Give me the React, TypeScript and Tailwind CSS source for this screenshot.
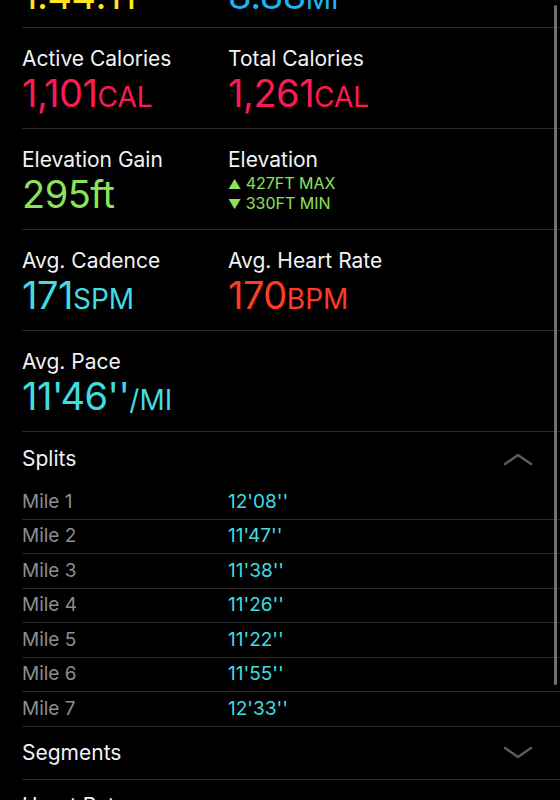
import type { ReactNode } from 'react';

const font = { fontFamily: 'Inter, "Noto Sans", sans-serif' };

function Chevron({ up }: { up?: boolean }) {
  return (
    <svg width="30" height="14" viewBox="0 0 30 14" fill="none" className="text-[#5c5c60]">
      <polyline
        points={up ? '2,12 15,3 28,12' : '2,2 15,11 28,2'}
        stroke="currentColor"
        strokeWidth="2.4"
        strokeLinecap="round"
        strokeLinejoin="round"
      />
    </svg>
  );
}

function Value({ num, unit, color }: { num: string; unit?: string; color: string }) {
  return (
    <div className={`mt-[2px] text-[38px] leading-[40px] tracking-[-0.5px] ${color}`}>
      {num}
      {unit ? <span className="text-[28px] tracking-[0px]">{unit}</span> : null}
    </div>
  );
}

function Metric({ label, children }: { label?: string; children?: ReactNode }) {
  return (
    <div>
      {label ? <div className="text-[21px] leading-[25px] text-[#f2f2f4]">{label}</div> : <div className="h-[25px]" />}
      {children}
    </div>
  );
}

function Row({ children, first }: { children: ReactNode; first?: boolean }) {
  return (
    <div
      className={`grid grid-cols-[206px_1fr] border-b border-[#2b2b2e] pt-[18px] ${
        first ? '-mt-[70px] h-[98px]' : 'h-[101px]'
      }`}
    >
      {children}
    </div>
  );
}

const splits = [
  ['Mile 1', "12'08''"],
  ['Mile 2', "11'47''"],
  ['Mile 3', "11'38''"],
  ['Mile 4', "11'26''"],
  ['Mile 5', "11'22''"],
  ['Mile 6', "11'55''"],
  ['Mile 7', "12'33''"],
];

export default function App() {
  return (
    <div className="relative h-[800px] w-[560px] overflow-hidden bg-black" style={font}>
      <div className="pl-[22px]">
        <Row first>
          <Metric label="Workout Time">
            <Value num="1:44:11" color="text-[#ffe620]" />
          </Metric>
          <Metric label="Distance">
            <Value num="8.88" unit="MI" color="text-[#1fb4f0]" />
          </Metric>
        </Row>
        <Row>
          <Metric label="Active Calories">
            <Value num="1,101" unit="CAL" color="text-[#fb1a55]" />
          </Metric>
          <Metric label="Total Calories">
            <Value num="1,261" unit="CAL" color="text-[#fb1a55]" />
          </Metric>
        </Row>
        <Row>
          <Metric label="Elevation Gain">
            <Value num="295ft" color="text-[#8ee25b]" />
          </Metric>
          <Metric label="Elevation">
            <div className="mt-[2px] text-[16px] leading-[19px] text-[#8ee25b]">
              <div>
                <span className="text-[13px]">▲</span> 427FT MAX
              </div>
              <div>
                <span className="text-[13px]">▼</span> 330FT MIN
              </div>
            </div>
          </Metric>
        </Row>
        <Row>
          <Metric label="Avg. Cadence">
            <Value num="171" unit="SPM" color="text-[#43dbe2]" />
          </Metric>
          <Metric label="Avg. Heart Rate">
            <Value num="170" unit="BPM" color="text-[#ff3b27]" />
          </Metric>
        </Row>
        <Row>
          <Metric label="Avg. Pace">
            <Value num="11'46''" unit="/MI" color="text-[#43dbe2]" />
          </Metric>
          <Metric />
        </Row>

        <section>
          <div className="flex h-[53px] items-center justify-between pr-[27px]">
            <span className="text-[21px] leading-[25px] text-[#f2f2f4]">Splits</span>
            <Chevron up />
          </div>
          {splits.map(([mile, pace]) => (
            <div
              key={mile}
              className="grid h-[34.5px] grid-cols-[206px_1fr] items-center border-b border-[#2b2b2e] text-[19px] leading-[22px]"
            >
              <span className="text-[#8d8d92]">{mile}</span>
              <span className="text-[#43dbe2]">{pace}</span>
            </div>
          ))}
        </section>

        <div className="flex h-[53px] items-center justify-between border-b border-[#2b2b2e] pr-[27px]">
          <span className="text-[21px] leading-[25px] text-[#f2f2f4]">Segments</span>
          <Chevron />
        </div>
        <div className="flex h-[53px] items-start justify-between pr-[27px] pt-[13px]">
          <span className="text-[21px] leading-[25px] text-[#f2f2f4]">Heart Rate</span>
          <div className="mt-[14px]">
            <Chevron />
          </div>
        </div>
      </div>

      <div className="absolute right-[3px] top-[5px] h-[680px] w-[3px] rounded-full bg-[#6f6f72]" />
    </div>
  );
}
